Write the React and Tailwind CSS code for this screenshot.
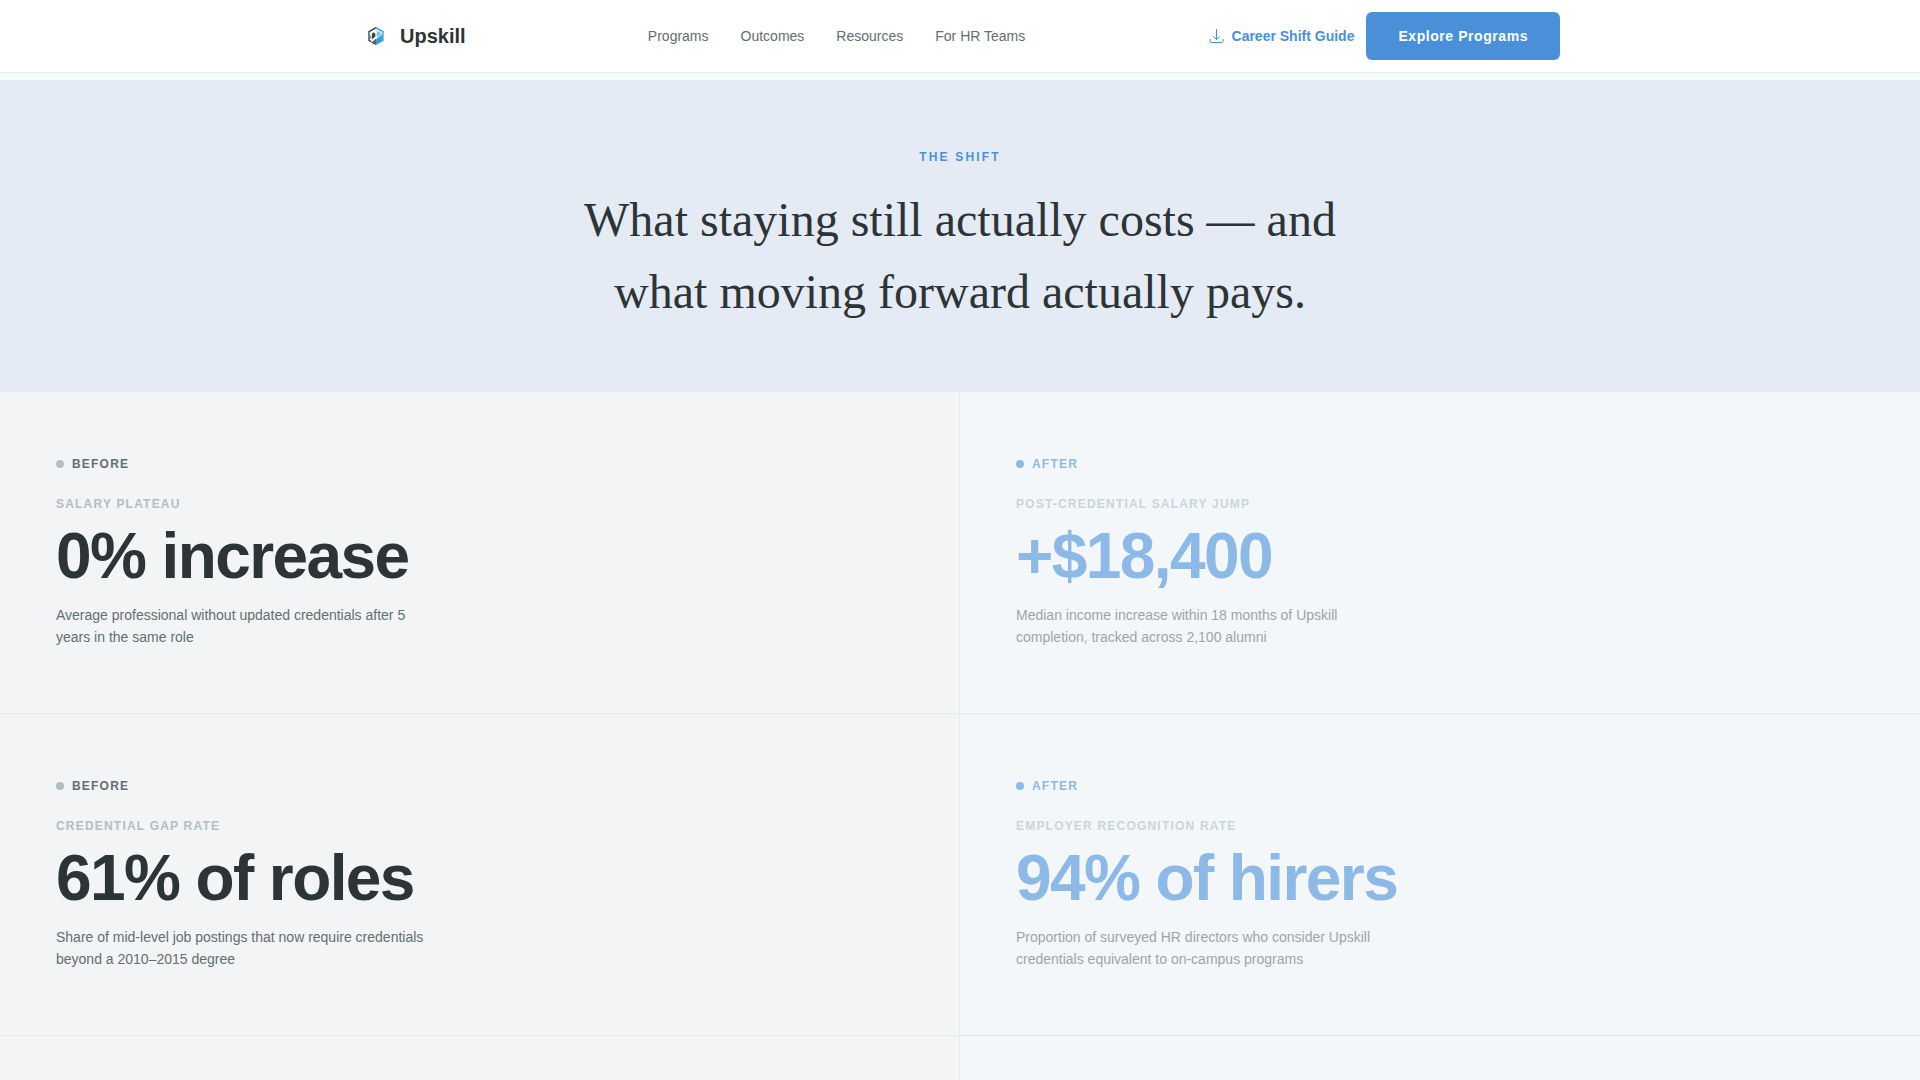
import React from 'react';

const navLinks = ['Programs', 'Outcomes', 'Resources', 'For HR Teams'];

const shifts = [
  {
    id: 1,
    before: {
      label: 'Salary Plateau',
      value: '0% increase',
      text: 'Average professional without updated credentials after 5 years in the same role',
    },
    after: {
      label: 'Post-Credential Salary Jump',
      value: '+$18,400',
      text: 'Median income increase within 18 months of Upskill completion, tracked across 2,100 alumni',
    },
  },
  {
    id: 2,
    before: {
      label: 'Credential Gap Rate',
      value: '61% of roles',
      text: 'Share of mid-level job postings that now require credentials beyond a 2010–2015 degree',
    },
    after: {
      label: 'Employer Recognition Rate',
      value: '94% of hirers',
      text: 'Proportion of surveyed HR directors who consider Upskill credentials equivalent to on-campus programs',
    },
  },
];

const Logo = () => (
  <svg viewBox="0 0 32 32" className="h-8 w-8" aria-hidden="true">
    {/* dark left half of the hexagon */}
    <path d="M16 7.6 9 11.6v8.8l7 4" fill="none" stroke="#2d3436" strokeWidth="1.3" />
    <path d="M13.4 12.4c1.5 0 2 1.2 2 2.6v1.4l-3.6 3.2v-4.8c0-1.500.6-2.400 1.600-2.400z" fill="#3b4448" />
    <path d="M10.600 15.600v3" stroke="#7c868b" strokeWidth="1" />
    <path d="M12.600 21.400l3.400-2.800v4.800z" fill="#59656b" />
    {/* blue right half */}
    <path d="M16 7.600l7 4v8.800l-7 4" fill="#c9e7f7" stroke="#3aa3dc" strokeWidth="1.300" />
    <path d="M17 15.200c0-2 .8-3 2-3s1.800.8 1.800 2.200l-3.800 3z" fill="#4b9fce" />
    <path d="M16 19.600l6.400-5v5.600L16 24z" fill="#35a0dc" />
    <path d="M10.500 22.500 21.500 12" stroke="#fff" strokeWidth="0.900" />
  </svg>
);

const DownloadIcon = () => (
  <svg viewBox="0 0 18 18" className="h-[18px] w-[18px]" fill="none" stroke="currentColor" strokeLinecap="round" strokeLinejoin="round" aria-hidden="true">
    <path d="M8.500 2.500v10M5.500 9.500l3 3 3-3" />
    <path d="M2 12.500v1.500a1.500 1.500 0 0 0 1.500 1.500h10a1.500 1.500 0 0 0 1.500-1.500v-1.500" />
  </svg>
);

const Header = () => (
  <header className="border-b border-[#e6eaed] bg-white">
    <div className="mx-auto flex h-[72px] max-w-[1200px] items-center justify-between">
      <a href="#home" className="flex items-center gap-2 text-xl font-bold text-[#2d3436]">
        <Logo />
        Upskill
      </a>
      <nav className="flex gap-8 text-sm text-[#636e72]">
        {navLinks.map((link) => (
          <a key={link} href="#programs">{link}</a>
        ))}
      </nav>
      <div className="flex items-center gap-3">
        <a href="#guide" className="flex items-center gap-1.5 text-sm font-bold text-[#4a90d9]">
          <DownloadIcon />
          Career Shift Guide
        </a>
        <button className="h-12 rounded-md bg-[#4a90d9] px-8 text-sm font-bold tracking-[0.04em] text-white">
          Explore Programs
        </button>
      </div>
    </div>
  </header>
);

const Stat = ({ stat, after }) => (
  <div className={after ? 'opacity-60' : ''}>
    <div className="mb-6 flex items-center gap-2">
      <span className={`h-2 w-2 rounded-full ${after ? 'bg-[#4a90d9]' : 'bg-[#b2bec3]'}`} />
      <span className={`text-xs font-bold uppercase tracking-widest ${after ? 'text-[#4a90d9]' : 'text-[#636e72]'}`}>
        {after ? 'After' : 'Before'}
      </span>
    </div>
    <h3 className="mb-3 text-xs font-bold uppercase tracking-widest text-[#b2bec3]">{stat.label}</h3>
    <p className={`mb-4 text-[64px] font-bold leading-none tracking-tight ${after ? 'text-[#4a90d9]' : 'text-[#2d3436]'}`}>
      {stat.value}
    </p>
    <p className="max-w-[380px] text-sm leading-[22px] text-[#636e72]">{stat.text}</p>
  </div>
);

const App = () => {
  return (
    <div className="flex min-h-screen flex-col bg-[#f5fafd] font-['Liberation_Sans',Arial,sans-serif]">
      <Header />
      <main className="mt-[7px] flex grow flex-col">
        <section className="bg-[#e4ebf4] px-6 py-16 text-center">
          <p className="mb-[14px] text-xs font-bold uppercase leading-[26px] tracking-[0.18em] text-[#4a90d9]">The Shift</p>
          <h2 className="mx-auto max-w-[800px] font-['Liberation_Serif',Georgia,serif] text-5xl leading-[72px] text-[#2d3436]">
            What staying still actually costs — and what moving forward actually pays.
          </h2>
        </section>
        {shifts.map((shift) => (
          <section key={shift.id} className="grid min-h-[322px] grid-cols-2 border-b border-[#e4e9ec]">
            <div className="border-r border-[#e4e9ec] bg-[#f2f4f6] px-14 py-16">
              <Stat stat={shift.before} />
            </div>
            <div className="bg-[#f3f7fa] px-14 py-16">
              <Stat stat={shift.after} after />
            </div>
          </section>
        ))}
        <div className="grid grow grid-cols-2">
          <div className="border-r border-[#e4e9ec] bg-[#f2f4f6]" />
          <div className="bg-[#f3f7fa]" />
        </div>
      </main>
    </div>
  );
};

export default App;
